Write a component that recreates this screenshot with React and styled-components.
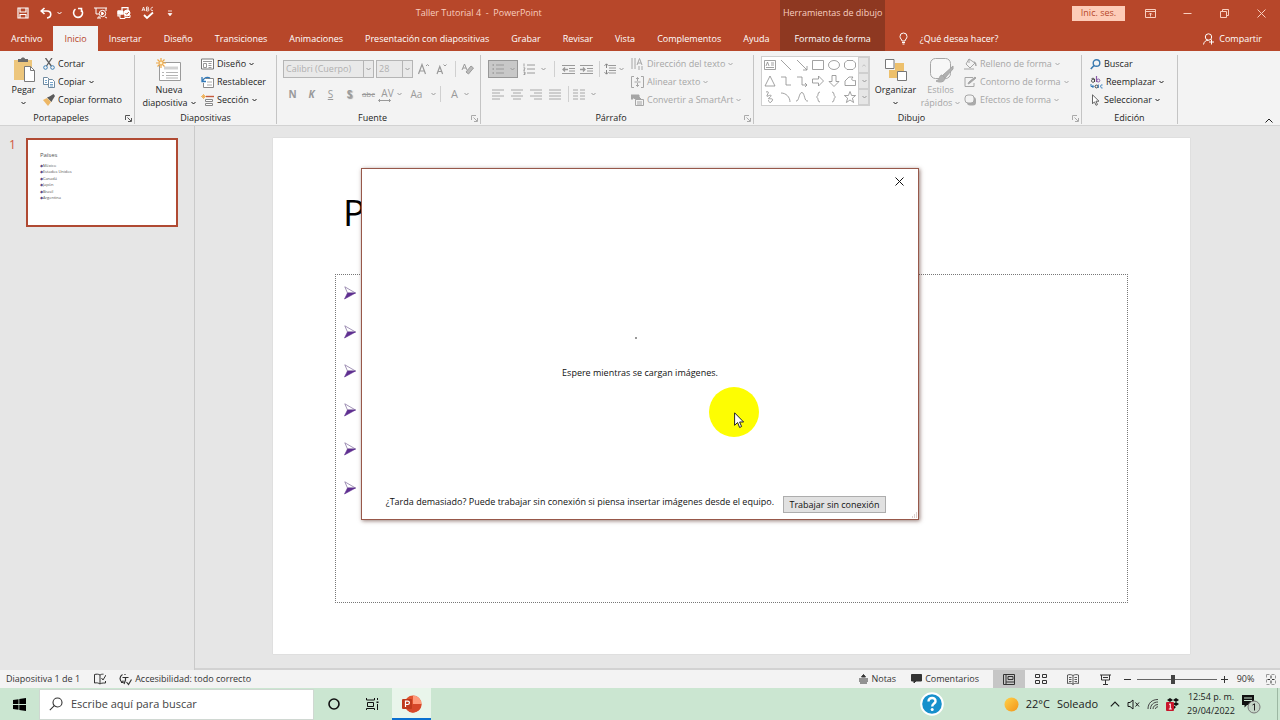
import { useState } from "react";
import styled, { createGlobalStyle, css } from "styled-components";

const GlobalStyle = createGlobalStyle`
  * {
    box-sizing: border-box;
  }

  body {
    margin: 0;
    font-family: "Open Sans", "Noto Sans", sans-serif;
    font-size: 9px;
    line-height: 12px;
    color: #1e1e1e;
  }

  button,
  select,
  input {
    margin: 0;
    padding: 0;
    border: none;
    background: none;
    font: inherit;
    color: inherit;
  }

  svg {
    display: block;
    flex: none;
  }
`;

const Window = styled.div`
  position: relative;
  display: flex;
  flex-direction: column;
  min-height: 100vh;
  background: #e6e6e6;
  overflow: hidden;
`;

/* ---------- header ---------- */

const Header = styled.header`
  display: flex;
  height: 51px;
  background: #b7472a;
  color: #fff;
  white-space: nowrap;
`;

const HeaderBlock = styled.div`
  display: flex;
  flex-direction: column;
  flex: ${(props) => (props.$grow ? "1" : "none")};
  background: ${(props) => (props.$dark ? "#8e3821" : "none")};
`;

const TitleRow = styled.div`
  display: flex;
  align-items: center;
  justify-content: ${(props) => props.$justify || "flex-start"};
  height: 26px;
  color: #f9cfc0;
`;

const QuickAccess = styled.div`
  display: flex;
  align-items: center;
  padding-left: 16px;
  gap: 9px;
  color: #fff;
`;

const UndoGroup = styled.div`
  display: flex;
  align-items: center;
  gap: 4px;
`;

const Title = styled.div`
  flex: 1;
  text-align: center;
  white-space: pre;
`;

const IconButton = styled.button`
  display: flex;
  align-items: center;
  justify-content: center;
  flex: none;
  width: ${(props) => props.$width || 14}px;
  height: ${(props) => props.$height || 14}px;
  color: ${(props) => props.$color || "inherit"};
`;

const TabRow = styled.nav`
  display: flex;
  align-items: stretch;
  flex: 1;
`;

const Tab = styled.button`
  height: 25px;
  padding: 0 ${(props) => props.$pad || 11}px;

  ${(props) =>
    props.$active &&
    css`
      background: #f3f3f3;
      color: #b7472a;
    `}
`;

const TellMe = styled.button`
  display: flex;
  align-items: center;
  gap: 12px;
  padding-left: 14px;
`;

const Share = styled.button`
  display: flex;
  align-items: center;
  gap: 4px;
  margin-left: auto;
  padding-right: 18px;
`;

const SignIn = styled.button`
  width: 53px;
  height: 15px;
  margin-right: 7px;
  background: #fdccb8;
  color: #b7472a;
`;

/* ---------- ribbon ---------- */

const Ribbon = styled.div`
  display: flex;
  height: 75px;
  padding-top: 4px;
  background: #f3f3f3;
  border-bottom: 1px solid #d2d2d2;
  white-space: nowrap;
`;

const Group = styled.section`
  display: flex;
  flex-direction: column;
  flex: none;
  width: ${(props) => props.$width}px;
  height: 69px;
  border-right: 1px solid #c4c4c4;
`;

const GroupBody = styled.div`
  display: flex;
  gap: ${(props) => props.$gap || 0}px;
  height: 57px;
  padding-left: ${(props) => props.$left || 0}px;
`;

const GroupFooter = styled.div`
  display: flex;
  align-items: center;
  height: 12px;
  text-align: center;
`;

const GroupLabel = styled.div`
  flex: 1;
`;

const Stack = styled.div`
  display: flex;
  flex-direction: column;
`;

const SmallButton = styled.button`
  display: flex;
  align-items: center;
  gap: 3px;
  height: 18px;
  color: ${(props) => (props.$off ? "#a6a6a6" : "#1e1e1e")};
`;

const BigButton = styled.button`
  display: flex;
  flex-direction: column;
  align-items: center;
  width: ${(props) => props.$width}px;
  padding-top: 2px;
  color: ${(props) => (props.$off ? "#a6a6a6" : "#1e1e1e")};
`;

const BigLabel = styled.span`
  display: flex;
  align-items: center;
  gap: 3px;
  height: 13px;
`;

const Picture = styled.span`
  display: flex;
  align-items: center;
  justify-content: center;
  height: 26px;
`;

const ToolRow = styled.div`
  display: flex;
  align-items: center;
  height: 18px;
  margin-top: 5px;
  color: #9a9a9a;

  & + & {
    margin-top: 7px;
  }
`;

const Combo = styled.label`
  display: flex;
  align-items: center;
  width: ${(props) => props.$width}px;
  height: 18px;
  margin-right: 2px;
  border: 1px solid #b5b5b5;
  background: #e9e9e9;

  select {
    flex: 1;
    min-width: 0;
    height: 16px;
    padding-left: 2px;
    appearance: none;
    color: #b0b0b0;
    opacity: 1;
  }

  svg {
    width: 10px;
    height: 16px;
    padding: 6px 2px;
    border-left: 1px solid #b5b5b5;
  }
`;

const Divider = styled.span`
  width: 1px;
  height: 16px;
  margin: 0 4px;
  background: #d0d0d0;
`;

const Letter = styled.button`
  width: ${(props) => props.$width || 19}px;
  text-align: center;
  font-size: ${(props) => props.$size || 10}px;
  font-weight: ${(props) => (props.$bold ? 700 : 400)};
  font-style: ${(props) => (props.$italic ? "italic" : "normal")};
  text-decoration: ${(props) => props.$line || "none"};
  text-shadow: ${(props) => (props.$shadow ? "1px 1px 1px #999" : "none")};
`;

const ListButton = styled.button`
  display: flex;
  align-items: center;
  justify-content: center;
  gap: 6px;
  width: 30px;
  height: 18px;
  margin-right: 1px;
  border: 1px solid ${(props) => (props.$pressed ? "#979797" : "transparent")};
  background: ${(props) => (props.$pressed ? "#c8c8c8" : "none")};
`;

const Gallery = styled.div`
  display: flex;
  height: 50px;
  margin-top: 1px;
  border: 1px solid #cfcfcf;
  background: #fff;
`;

const Shapes = styled.div`
  display: grid;
  grid-template-columns: repeat(6, 16px);
  grid-auto-rows: 16px;
`;

const Scroller = styled.div`
  display: flex;
  flex-direction: column;

  button {
    flex: 1;
    width: 11px;
    padding-left: 3px;
    border: 1px solid #cfcfcf;
    background: #e6e6e6;
    color: #999;
  }
`;

const Collapse = styled.button`
  align-self: flex-end;
  margin-left: auto;
  padding: 0 7px 2px 0;
`;

/* ---------- workspace ---------- */

const Workspace = styled.main`
  display: flex;
  flex: 1;
`;

const Thumbnails = styled.aside`
  display: flex;
  align-items: flex-start;
  flex: none;
  width: 195px;
  padding: 12px 0 0 9px;
  gap: 10px;
  border-right: 1px solid #cacaca;
  font-size: 12px;
  line-height: 14px;
  color: #d0583e;
`;

const Thumbnail = styled.div`
  width: 152px;
  height: 89px;
  padding: 7px 12px;
  border: 2px solid #b04a33;
  background: #fff;
  color: #555;
  font-size: 6px;
  line-height: 16px;

  ul {
    display: flex;
    flex-direction: column;
    justify-content: space-between;
    height: 38px;
    margin: 0;
    padding: 0;
    list-style: none;
    font-size: 4px;
    line-height: 6px;
  }

  li::before {
    content: "◆";
    color: #5b4a86;
  }
`;

const Canvas = styled.div`
  flex: 1;
  padding: 12px 90px 14px 78px;
  border-bottom: 2px solid #d2d2d2;
`;

const Slide = styled.article`
  width: 100%;
  aspect-ratio: 16 / 9;
  padding: 48px 62px 0;
  background: #fff;
  box-shadow: 0 0 1px #bbb;
  color: #000;

  h1 {
    height: 88px;
    margin: 0;
    padding-left: 8px;
    font-size: 37px;
    font-weight: 400;
    line-height: 52px;
  }
`;

const Placeholder = styled.ul`
  height: 329px;
  margin: 0;
  padding: 0 0 0 8px;
  border: 1px dotted #777;
  list-style: none;

  li {
    height: 39px;
    padding-top: 11px;
  }
`;

/* ---------- dialog ---------- */

const Overlay = styled.div`
  position: absolute;
  inset: 0 0 32px;
  display: flex;
  align-items: center;
  justify-content: center;
`;

const Dialog = styled.div`
  display: flex;
  flex-direction: column;
  width: 558px;
  height: 352px;
  border: 1px solid #97584a;
  background: #fff;
  box-shadow: 1px 1px 4px rgba(80, 40, 30, 0.6);
  color: #111;
`;

const DialogTop = styled.div`
  display: flex;
  justify-content: flex-end;
  padding: 5px 12px 0 0;
`;

const Loading = styled.div`
  display: flex;
  flex-direction: column;
  align-items: center;
  flex: 1;
  padding-top: 149px;
  gap: 28px;
`;

const Dot = styled.span`
  width: 2px;
  height: 2px;
  margin-right: 8px;
  background: #999;
`;

const DialogBottom = styled.div`
  display: flex;
  align-items: flex-start;
  justify-content: flex-end;
  gap: 9px;
  height: 23px;
`;

const OfflineButton = styled.button`
  width: 103px;
  height: 17px;
  margin-right: 16px;
  border: 1px solid #adadad;
  background: #e1e1e1;
`;

const Grip = styled.span`
  align-self: flex-end;
`;

const Pointer = styled.div`
  position: absolute;
  left: 709px;
  top: 387px;
  width: 50px;
  height: 50px;
  padding: 25px 0 0 25px;
  border-radius: 50%;
  background: #fdfd02;
`;

/* ---------- status bar ---------- */

const StatusBar = styled.footer`
  display: flex;
  align-items: center;
  height: 18px;
  padding-left: 6px;
  background: #f3f3f3;
  color: #333;
  white-space: nowrap;
`;

const StatusItem = styled.button`
  display: flex;
  align-items: center;
  gap: 3px;
  margin-right: ${(props) => props.$after || 0}px;
`;

const ViewButton = styled.button`
  display: flex;
  align-items: center;
  justify-content: center;
  width: 32px;
  height: 18px;
  background: ${(props) => (props.$active ? "#c6c6c6" : "none")};
`;

const Spacer = styled.div`
  flex: 1;
`;

const ZoomSlider = styled.input`
  width: 80px;
  height: 12px;
  margin: 0 4px;
  appearance: none;
  background: linear-gradient(#666, #666) center / 100% 1px no-repeat;

  &::-webkit-slider-thumb {
    appearance: none;
    width: 4px;
    height: 9px;
    background: #444;
  }
`;

const ZoomValue = styled.button`
  width: 31px;
  margin: 0 5px 0 2px;
`;

/* ---------- taskbar ---------- */

const Taskbar = styled.footer`
  display: flex;
  align-items: center;
  height: 32px;
  background: #cbe6d1;
  color: #1a1a1a;
  white-space: nowrap;
`;

const SearchBox = styled.label`
  display: flex;
  align-items: center;
  gap: 8px;
  width: 275px;
  height: 31px;
  padding-left: 9px;
  border: 1px solid #d0d8d2;
  background: #fff;

  input {
    flex: 1;
    min-width: 0;
    outline: none;
    font-size: 11px;
  }

  input::placeholder {
    color: #444;
    opacity: 1;
  }
`;

const TaskButton = styled.button`
  display: flex;
  align-items: center;
  justify-content: center;
  width: 39px;
  height: 32px;
  border-bottom: 2px solid ${(props) => (props.$active ? "#0a6fd0" : "transparent")};
  border-top: 2px solid transparent;
  background: ${(props) => (props.$active ? "#e9f5eb" : "none")};
`;

const Weather = styled.button`
  display: flex;
  align-items: center;
  gap: 7px;
  margin-left: 60px;
  font-size: 11px;
`;

const Tray = styled.div`
  display: flex;
  align-items: center;
  gap: 7px;
  padding: 0 5px 0 12px;
`;

const Clock = styled.time`
  width: 54px;
  text-align: center;
  line-height: 14px;
`;

const ShowDesktop = styled.span`
  width: 3px;
  height: 32px;
  margin-left: 13px;
  border-left: 1px solid #9db8a3;
`;

/* ---------- icons ---------- */

function Icon({ w = 12, h = 12, box, children }) {
  return (
    <svg
      width={w}
      height={h}
      viewBox={box || `0 0 ${w} ${h}`}
      fill="none"
      stroke="currentColor"
      strokeWidth="1"
      aria-hidden="true"
    >
      {children}
    </svg>
  );
}

const Chevron = () => (
  <Icon w={5} h={4}>
    <path d="M.5 1l2 2 2-2" />
  </Icon>
);

const ChevronUp = ({ w = 8 }) => (
  <Icon w={w} h={w / 2 + 1} box="0 0 8 5">
    <path d="M.5 4.500L4 1l3.500 3.500" />
  </Icon>
);

const SaveIcon = () => (
  <Icon>
    <path d="M1 1h10v10H1zM3 1v4h6V1M3 11V7.500h6V11" strokeWidth="1.200" />
  </Icon>
);

const UndoIcon = () => (
  <Icon>
    <path d="M4.500 1L1.200 4l3.300 3M1.500 4H7c5 0 5 6.500 0 7" strokeWidth="1.600" />
  </Icon>
);

const RepeatIcon = () => (
  <Icon>
    <path d="M3.500 2.200a4.500 4.500 0 1 0 5.500.3M9.500 5V1.500H6" strokeWidth="1.600" />
  </Icon>
);

const PresentIcon = () => (
  <Icon w={14}>
    <path d="M0 1h13M2 1v6h3M3 11h4M5 11V9" />
    <circle cx="8.500" cy="6.500" r="3.200" />
    <path d="M7.700 5v3l2.200-1.500z" fill="currentColor" />
    <path d="M12 1v3M11 10l2 1" />
  </Icon>
);

const PrintIcon = () => (
  <Icon w={14}>
    <path d="M5 4V.6h6V4M3 9H1V4h3" strokeWidth="1.200" />
    <path d="M1 4h5v3H1z" fill="currentColor" />
    <path d="M3 7h5v4.500H3z" />
    <circle cx="10" cy="6" r="3" fill="currentColor" />
    <path d="M8.500 6l1.200 1.300L11.800 5" stroke="#b7472a" />
    <path d="M8 10.500h5V8" />
  </Icon>
);

const SpellIcon = () => (
  <Icon w={13} h={14}>
    <path d="M1 5L2.500 1 4 5M1.500 3.800h2M5.500 1v4H7c1.300 0 1.300-2 0-2H5.500M5.500 1h1.200c1.200 0 1.200 2 0 2M12 1.500C9.500.2 9 5.800 12 4.500" strokeWidth=".8" />
    <path d="M3 9l3 3 6-5.500" strokeWidth="1.800" />
  </Icon>
);

const CustomizeIcon = () => (
  <Icon w={6} h={7}>
    <path d="M1 1h4M1.200 3.500h3.600L3 5.800z" fill="currentColor" strokeWidth=".8" />
  </Icon>
);

const RibbonOptionsIcon = () => (
  <Icon w={11} h={9}>
    <path d="M.5.5h10v8H.5zM.5 2.500h10M5.500 7.500V4M4 5.500L5.500 4 7 5.500" />
  </Icon>
);

const MinimizeIcon = () => (
  <Icon w={9} h={9}>
    <path d="M.5 4.500h8" />
  </Icon>
);

const RestoreIcon = () => (
  <Icon w={9} h={9}>
    <path d="M.5 2.500h6v6h-6zM2.500 2.500v-2h6v6h-2" />
  </Icon>
);

const CloseIcon = () => (
  <Icon w={9} h={9}>
    <path d="M.5.5l8 8M8.500.5l-8 8" />
  </Icon>
);

const BulbIcon = () => (
  <Icon w={9} h={13}>
    <path d="M3 9c0-1.500-2-2.300-2-4.500a3.500 3.500 0 0 1 7 0C8 6.700 6 7.500 6 9zM3 10.500h3M3.500 12h2" />
  </Icon>
);

const PersonIcon = () => (
  <Icon>
    <circle cx="5.500" cy="4" r="3.200" />
    <path d="M.5 11.500C1 8.500 3 7.200 5.500 7.200M8.500 6.500v5M6 9h5" />
  </Icon>
);

const PasteIcon = () => (
  <Icon w={24} h={26}>
    <path d="M2 3h18v20H2z" fill="#edc67c" stroke="none" />
    <path d="M6 5V2h3c0-2 4-2 4 0h3v3z" fill="#6a6a6a" stroke="none" />
    <path d="M12.500 9.500h6l4 4v11h-10z" fill="#fff" stroke="#7a7a7a" />
    <path d="M18.500 9.500v4h4" stroke="#7a7a7a" />
  </Icon>
);

const CutIcon = () => (
  <Icon>
    <path d="M2.500 0l5.800 8M9 0L3.500 8" stroke="#5e5e5e" strokeWidth="1.300" />
    <circle cx="2.500" cy="9.500" r="1.800" stroke="#3c7fb5" />
    <circle cx="9.500" cy="9.500" r="1.800" stroke="#3c7fb5" />
  </Icon>
);

const CopyIcon = () => (
  <Icon>
    <path d="M.5 1.500h4l2 2v5h-6z" fill="#fff" stroke="#6f8aa0" />
    <path d="M5.500 3.500h4l2 2v6h-6z" fill="#fff" stroke="#6f8aa0" />
    <path d="M2 4.500h2M2 6.500h2M7 6.500h3M7 8.500h3M7 10h3" stroke="#3c7fb5" strokeWidth=".7" />
  </Icon>
);

const BrushIcon = () => (
  <Icon>
    <path d="M0 6l4-2 4 4-3 4z" fill="#edb765" stroke="none" />
    <path d="M4 3.500l4.500 4.500 1-2L12 2 10.500 0 6.500 2.500z" fill="#5a5a5a" stroke="none" />
  </Icon>
);

const NewSlideIcon = () => (
  <Icon w={26} h={24}>
    <path d="M3.500 4.500h21v18h-21z" fill="#fff" stroke="#9a9a9a" />
    <path d="M8 8.500h14v3H8z" fill="#d2d2d2" stroke="none" />
    <path d="M6 14.500h2M10 14.500h12M6 17.500h2M10 17.500h12M10 20h12" stroke="#b4b4b4" />
    <path d="M5 0v10M0 5h10M1.500 1.500l7 7M8.500 1.500l-7 7" stroke="#eda94a" strokeWidth="1.200" />
    <circle cx="5" cy="5" r="2" fill="#fff3d0" stroke="#eda94a" />
  </Icon>
);

const LayoutIcon = () => (
  <Icon w={13}>
    <path d="M.5 1h12v10H.5z" fill="#fff" stroke="#777" />
    <path d="M2 3.500h9M2.500 5.500h3v4h-3zM7.500 5.500h3M7.500 7.500h3M7.500 9.500h3" stroke="#999" />
  </Icon>
);

const ResetIcon = () => (
  <Icon w={13}>
    <path d="M4.500 2.500h8v9h-10V7" fill="#fff" stroke="#888" />
    <path d="M6 6h5M6 9h5" stroke="#aaa" />
    <path d="M1 1v4.500h4M1.500 5C3 1.500 6.500.5 9 2" stroke="#2f78b8" strokeWidth="1.300" />
  </Icon>
);

const SectionIcon = () => (
  <Icon w={13}>
    <path d="M5 2.500h8" stroke="#c65a3b" strokeWidth="1.400" />
    <path d="M4.500 5.500h7v2h-7zM4.500 9.500h7v2h-7z" fill="#fff" stroke="#888" />
    <path d="M2.500 0v5M0 2.500h5M1 1l3 3M4 1L1 4" stroke="#eda94a" strokeWidth=".8" />
  </Icon>
);

const GrowIcon = ({ down }) => (
  <Icon w={12} h={12}>
    <path d={down ? "M1 11l2.800-7.500L6.600 11M2 8.500h3.600" : "M.5 11L4 1.500 7.500 11M1.800 8h4.400"} strokeWidth="1.200" />
    <path d={down ? "M7.500 1.500L9 3l1.500-1.500" : "M8 3l1.500-1.500L11 3"} />
  </Icon>
);

const EraserIcon = () => (
  <Icon w={13} h={13}>
    <path d="M1 7l2.500-6L6 7M2 5h3" />
    <path d="M5 9l5-6 2.500 2-5 6z" fill="#bbb" />
  </Icon>
);

const SpacingLettersArrow = () => (
  <Icon w={13} h={3}>
    <path d="M.5 1.500h12M2 0L.5 1.500 2 3M11 0l1.500 1.500L11 3" />
  </Icon>
);

const ListIcon = ({ numbered }) => (
  <Icon w={12} h={12}>
    <path d="M4 2h8M4 6h8M4 10h8" />
    {numbered ? (
      <path d="M1 .5v3M.5 4.800h1.300v1.200L.5 7.300h1.500M.5 9h1.500v2.500H.5M1 10.200h1" stroke="#8a8a8a" strokeWidth=".8" />
    ) : (
      <path d="M.5 2h1.500M.5 6h1.500M.5 10h1.500" strokeWidth="1.500" />
    )}
  </Icon>
);

const IndentIcon = ({ right }) => (
  <Icon w={13} h={11}>
    <path d="M0 1.500h13M7 4.500h6M7 7h6M0 9.500h13" />
    <path d={right ? "M0 5.500h5M3 3.500l2 2-2 2" : "M6 5.500H1M3 3.500l-2 2 2 2"} strokeWidth="1.300" />
  </Icon>
);

const SpacingIcon = () => (
  <Icon>
    <path d="M5 2.500h7M5 5h7M5 7.500h7M5 10h7" />
    <path d="M2.500 5V1M.5 2.800L2.500.8l2 2M2.500 7v4M.5 9.200l2 2 2-2" stroke="#858585" />
  </Icon>
);

const AlignIcon = ({ d }) => (
  <Icon w={12} h={11}>
    <path d={d} stroke="#a8a8a8" />
  </Icon>
);

const DirectionIcon = () => (
  <Icon w={13}>
    <path d="M1 0v11M4 0v11M6 7l2.500-6.500L11 7M7 5h3M8 8v4M11 8v4" />
  </Icon>
);

const AlignTextIcon = () => (
  <Icon w={13}>
    <path d="M3 .5H.5v11H3M10 .5h2.500v11H10M3.500 6h6M6.500 5V1.500M5 3l1.500-1.500L8 3M6.500 7v3.500M5 9l1.500 1.500L8 9" />
  </Icon>
);

const SmartArtIcon = () => (
  <Icon w={13}>
    <path d="M0 1h8v2H2v2H0zM2 3h6l2 2H4z" fill="currentColor" />
    <path d="M4.500 5.500h8v6h-8zM6 8h5M6 10h5" fill="#f3f3f3" />
  </Icon>
);

const ArrangeIcon = () => (
  <Icon w={22} h={22}>
    <path d="M10 4h9v9h-9zM4 11h8v8H4z" fill="#edc06c" stroke="none" />
    <path d="M.5.5h8.500v9H.5zM12.500 12.500h9v9h-9z" fill="#fff" stroke="#777" />
  </Icon>
);

const StylesIcon = () => (
  <Icon w={26} h={26}>
    <rect x="2.500" y="1.500" width="20" height="20" rx="5" fill="#f7f7f7" />
    <path d="M25 9L15 18l2 3 8-9zM14 18c-3 0-2 5-6 6 4 2 9 1 9-3z" fill="#b0b0b0" />
  </Icon>
);

const FillIcon = () => (
  <Icon w={13}>
    <path d="M5 1l6 4-5 5-4-4zM5 1v4" />
    <path d="M10 4c2 1 2 2 2 4" strokeWidth="1.500" />
    <path d="M0 11h10" stroke="#ccc" strokeWidth="2" />
  </Icon>
);

const OutlineIcon = () => (
  <Icon w={13}>
    <path d="M9 1.500H1v9h9V7" />
    <path d="M4 8l1-2 6-5 1 1-6 5z" fill="currentColor" />
  </Icon>
);

const EffectsIcon = () => (
  <Icon w={13}>
    <rect x="3" y="3" width="9" height="8.500" rx="3" fill="#aaa" stroke="none" />
    <rect x="1" y="1" width="9" height="8" rx="3" fill="#f3f3f3" />
  </Icon>
);

const FindIcon = () => (
  <Icon w={11} h={11}>
    <circle cx="6.500" cy="4" r="3.300" stroke="#3a7ab0" strokeWidth="1.400" />
    <path d="M4 6.500L.8 10" stroke="#3a7ab0" strokeWidth="1.600" />
  </Icon>
);

const ReplaceIcon = () => (
  <Icon w={13} h={13}>
    <path d="M4.500 3v3M4.500 4.500a1.500 1.500 0 1 0 0 .6M1.500 2.800c1-.8 3-.6 3 .6" stroke="#444" />
    <path d="M6.500 0v6" stroke="#8a5aa8" strokeWidth="1.200" />
    <circle cx="8.300" cy="4.500" r="1.500" stroke="#8a5aa8" />
    <path d="M1 8v2.500h2.500M2.500 9l1.300 1.500L2.500 12" stroke="#2f78b8" />
    <circle cx="6.500" cy="10.500" r="1.400" stroke="#444" />
    <path d="M8.300 8.500V12M12.500 9c-2.500-1-2.500 3.500 0 3" stroke="#2f78b8" />
  </Icon>
);

const SelectIcon = () => (
  <Icon w={11}>
    <path d="M2.500.8v9l2-2 1.500 3.500 1.500-.7L6 7.200h3z" fill="#fff" stroke="#666" />
  </Icon>
);

const LauncherIcon = () => (
  <Icon w={7} h={7}>
    <path d="M.5 5V.5H5M2.500 2.500l3.500 3.500M6.500 3v3.500H3" />
  </Icon>
);

const BulletArrow = () => (
  <Icon w={12} h={14}>
    <path d="M.8.8L11.500 7 3.500 7z" stroke="#8b7aa5" strokeWidth=".8" />
    <path d="M3.500 7h8L.5 13z" fill="#5f2f91" stroke="#5f2f91" strokeWidth=".6" />
  </Icon>
);

const CursorIcon = () => (
  <Icon w={11} h={17}>
    <path d="M.6.8v12.500l3-2.800 2 5 2-1-2-4.500h4z" fill="#fff" stroke="#222" />
  </Icon>
);

const GripIcon = () => (
  <Icon w={7} h={7}>
    <path d="M5 1h1M3 3h1M5 3h1M1 5h1M3 5h1M5 5h1" stroke="#b9a29c" />
  </Icon>
);

const BookIcon = () => (
  <Icon>
    <path d="M6 2C4.500 1 2.500 1 .5 1.500v8.500C3 9.500 4.500 10 6 11c1-.8 2-1 5.500-1V8M6 2v9M6 2c1-.8 2-.8 3.500-.8M7.500 5l1.500 2 3-5" />
  </Icon>
);

const AccessIcon = () => (
  <Icon w={13} h={13}>
    <path d="M3.500 1.500C0 3.500.5 8 3.500 9.500M2 9.500h2V7.500M6 1v1M3.500 4.500h6M6.500 4.500v3M6.500 7l-1.500 4M7.500 9l2 2.500 3-5" strokeWidth="1.200" />
  </Icon>
);

const NotesIcon = () => (
  <Icon w={9} h={10}>
    <path d="M4.500.5L2.500 3h4zM0 5h9M0 7h9M1 9h7" fill="currentColor" />
  </Icon>
);

const CommentIcon = () => (
  <Icon w={11} h={10}>
    <path d="M.5.5h10v6.500H5L3 9V7H.5z" fill="currentColor" />
  </Icon>
);

const NormalViewIcon = () => (
  <Icon w={12} h={11}>
    <path d="M.5.5h11v10H.5zM3 .5v10M5 2.500h5v3H5zM3 8h8.500" />
  </Icon>
);

const SorterIcon = () => (
  <Icon w={12} h={10}>
    <path d="M.5.5h4v3h-4zM7.500.5h4v3h-4zM.5 6.500h4v3h-4zM7.500 6.500h4v3h-4z" />
  </Icon>
);

const ReadingIcon = () => (
  <Icon w={12} h={11}>
    <path d="M6 1.500C4 .3 2.500.5.5 1v8.500c2-.5 3.500-.5 5.500.8 2-1.300 3.500-1.300 5.500-.8V1C9.500.5 8 .3 6 1.500zM6 1.500v9M2 3.500h2.500M2 5.500h2.500M2 7.500h2.500M7.500 3.500H10M7.500 5.500H10M7.500 7.500H10" strokeWidth=".8" />
  </Icon>
);

const ShowIcon = () => (
  <Icon w={11} h={11}>
    <path d="M0 1h11M1.500 1v5h8V1M3 3.500h5M5.500 6v4M3 10.500h5" />
  </Icon>
);

const FitIcon = () => (
  <Icon w={10} h={11}>
    <path d="M.5.5h9v10h-9z" stroke="#999" strokeDasharray="3 2" />
    <path d="M5 1.500v3M5 6.500v3M1.500 5.500h2.500M6 5.500h2.500" />
  </Icon>
);

const WindowsIcon = () => (
  <Icon w={13} h={13}>
    <path d="M0 2l5.500-.8V6H0zM6.300 1L13 0v6H6.300zM0 7h5.500v4.800L0 11zM6.300 7H13v6l-6.700-1z" fill="#000" stroke="none" />
  </Icon>
);

const SearchIcon = () => (
  <Icon w={14} h={14}>
    <circle cx="8.500" cy="5.500" r="4.500" stroke="#333" strokeWidth="1.100" />
    <path d="M5.300 8.700L.8 13.200" stroke="#333" strokeWidth="1.100" />
  </Icon>
);

const CortanaIcon = () => (
  <Icon w={12} h={12}>
    <circle cx="6" cy="6" r="5" stroke="#111" strokeWidth="1.600" />
  </Icon>
);

const TaskViewIcon = () => (
  <Icon w={13} h={12}>
    <path d="M.5 0v2h8V0M1.500 4.500h6v4h-6zM.5 12v-1.500h8V12M11.500 0v2M11.500 6v6" stroke="#111" />
    <path d="M10.500 3.500h2v1.500h-2z" fill="#111" stroke="none" />
  </Icon>
);

const PowerPointIcon = () => (
  <Icon w={20} h={18}>
    <circle cx="11" cy="9" r="8.500" fill="#e0532f" stroke="none" />
    <path d="M11 .5a8.500 8.500 0 0 1 8.500 8.500H11z" fill="#ff9b7c" stroke="none" />
    <path d="M11 9h8.500a8.500 8.500 0 0 1-15 5.500z" fill="#d6472a" stroke="none" />
    <rect x="0" y="4" width="10" height="10" rx="1" fill="#bf3a1d" stroke="none" />
    <path d="M3.500 12V6.200h2.200c2.300 0 2.300 3.300 0 3.300H3.500" stroke="#fff" strokeWidth="1.200" />
  </Icon>
);

const HelpIcon = () => (
  <Icon w={24} h={24}>
    <circle cx="12" cy="12" r="10.800" fill="#1690cc" stroke="#fff" strokeWidth="2" />
    <path d="M8.500 9.500c0-5 7.500-4.500 7 0-.2 2-3.300 2.300-3.300 5" stroke="#fff" strokeWidth="2.400" />
    <circle cx="12.200" cy="17.500" r="1.500" fill="#fff" stroke="none" />
  </Icon>
);

const SunIcon = () => (
  <Icon w={15} h={15}>
    <defs>
      <linearGradient id="sun" x1="0" y1="0" x2="1" y2="1">
        <stop offset="0" stopColor="#ffd24a" />
        <stop offset="1" stopColor="#f39419" />
      </linearGradient>
    </defs>
    <circle cx="7.500" cy="7.500" r="7" fill="url(#sun)" stroke="none" />
  </Icon>
);

const SpeakerIcon = () => (
  <Icon w={13} h={11}>
    <path d="M1 3.500h2L6 1v9L3 7.500H1zM8.500 3.500l3.500 4M12 3.500l-3.500 4" />
  </Icon>
);

const WifiIcon = () => (
  <Icon w={12} h={12}>
    <path d="M1 11C1 5 5 1.500 11 1.500M3.500 11c0-4 3-7 7.500-7M6 11c0-2.500 2-4.500 5-4.500M8.500 11c0-1.500 1-2.200 2.500-2.200" stroke="#444" />
  </Icon>
);

const DropboxIcon = () => (
  <Icon w={13} h={13}>
    <path d="M4 0l3 2-3 2-3-2zM10 0l3 2-3 2-3-2zM10 4l3 2-3 2-3-2zM7 7l3 2-2 2z" fill="#111" stroke="none" />
    <rect x="0" y="4" width="8" height="9" rx="1" fill="#c9152b" stroke="none" />
    <path d="M3 6.500L4.300 5.800V11M2.800 11h3" stroke="#fff" />
  </Icon>
);

const NoticeIcon = () => (
  <Icon w={20} h={20}>
    <path d="M1 1h12v10H6l-2.500 2.500V11H1z" fill="#111" stroke="none" />
    <path d="M3 4h8M3 6.500h8" stroke="#cbe6d1" />
    <circle cx="13" cy="13" r="6" fill="#c5d6c8" stroke="#777" />
    <path d="M11.500 11l2-1.200v6.700" stroke="#222" />
  </Icon>
);

/* ---------- data ---------- */

const tabs = [
  "Archivo",
  "Inicio",
  "Insertar",
  "Diseño",
  "Transiciones",
  "Animaciones",
  "Presentación con diapositivas",
  "Grabar",
  "Revisar",
  "Vista",
  "Complementos",
  "Ayuda",
];

const countries = [
  "México",
  "Estados Unidos",
  "Canadá",
  "Japón",
  "Brasil",
  "Argentina",
];

const alignments = [
  "M0 1h12M0 4h8M0 7h12M0 10h8",
  "M0 1h12M2 4h8M0 7h12M2 10h8",
  "M0 1h12M4 4h8M0 7h12M4 10h8",
  "M0 1h12M0 4h12M0 7h12M0 10h12",
];

const shapes = [
  "M2.500 3.500h11v9h-11zM4 9l1.500-4L7 9M9 6h3M9 8h3M4 10.500h8",
  "M3 3l10 10",
  "M3 3l10 10M13 9v4H9",
  "M2.500 3.500h11v9h-11z",
  "M2.500 8a5.500 4.500 0 1 0 11 0a5.500 4.500 0 1 0-11 0",
  "M5 3.500h6l2.500 2.500v4l-2.500 2.500H5L2.500 10V6z",
  "M8 3l5 10H3z",
  "M3 4h5v8h5",
  "M3 4h5v8h5M11 10l2 2-2 2",
  "M2.500 6h6V3l5 5-5 5v-3h-6z",
  "M6 2.500h4v6h3l-5 5-5-5h3z",
  "M3 12.500V8l4-4h4c-3 3 0 4 2.500 3.500v5z",
  "M4 3c6-2-2 6 2 4s4 0 1 2 6-1 3 3-3-1-4-1",
  "M3 4c5 0 9 4 9 9",
  "M2 12C5 13 5 3 8 3.500S10 13 14 12",
  "M10 3C7 3 9 7 6.500 8 9 9 7 13 10 13",
  "M6 3c3 0 1 4 3.500 5C7 9 9 13 6 13",
  "M8 2.500l1.600 4h4l-3.200 2.700 1.200 4.300L8 11l-3.600 2.500 1.200-4.300L2.400 6.500h4z",
];

function RibbonGroup({ width, left, gap, label, launcher, launcherColor, children }) {
  return (
    <Group $width={width}>
      <GroupBody $left={left} $gap={gap}>
        {children}
      </GroupBody>
      <GroupFooter>
        <GroupLabel>{label}</GroupLabel>
        {launcher && (
          <IconButton $width={12} $height={12} $color={launcherColor || "#aaa"}>
            <LauncherIcon />
          </IconButton>
        )}
      </GroupFooter>
    </Group>
  );
}

function Action({ icon, label, menu, off }) {
  return (
    <SmallButton $off={off}>
      {icon}
      {label}
      {menu && <Chevron />}
    </SmallButton>
  );
}

function HomeRibbon() {
  return (
    <Ribbon>
      <RibbonGroup width={135} left={4} label="Portapapeles" launcher launcherColor="#555">
        <BigButton $width={39}>
          <Picture>
            <PasteIcon />
          </Picture>
          <BigLabel>Pegar</BigLabel>
          <BigLabel>
            <Chevron />
          </BigLabel>
        </BigButton>
        <Stack>
          <Action icon={<CutIcon />} label="Cortar" />
          <Action icon={<CopyIcon />} label="Copiar" menu />
          <Action icon={<BrushIcon />} label="Copiar formato" />
        </Stack>
      </RibbonGroup>

      <RibbonGroup width={142} left={7} gap={5} label="Diapositivas">
        <BigButton $width={54}>
          <Picture>
            <NewSlideIcon />
          </Picture>
          <BigLabel>Nueva</BigLabel>
          <BigLabel>
            diapositiva
            <Chevron />
          </BigLabel>
        </BigButton>
        <Stack>
          <Action icon={<LayoutIcon />} label="Diseño" menu />
          <Action icon={<ResetIcon />} label="Restablecer" />
          <Action icon={<SectionIcon />} label="Sección" menu />
        </Stack>
      </RibbonGroup>

      <RibbonGroup width={204} left={6} label="Fuente" launcher>
        <Stack>
          <ToolRow>
            <Combo $width={91}>
              <select disabled aria-label="Fuente">
                <option>Calibri (Cuerpo)</option>
              </select>
              <Chevron />
            </Combo>
            <Combo $width={37}>
              <select disabled aria-label="Tamaño">
                <option>28</option>
              </select>
              <Chevron />
            </Combo>
            <IconButton $width={18}>
              <GrowIcon />
            </IconButton>
            <IconButton $width={18}>
              <GrowIcon down />
            </IconButton>
            <Divider />
            <IconButton>
              <EraserIcon />
            </IconButton>
          </ToolRow>
          <ToolRow>
            <Letter $bold>N</Letter>
            <Letter $bold $italic>
              K
            </Letter>
            <Letter $line="underline">S</Letter>
            <Letter $bold $shadow>
              S
            </Letter>
            <Letter $size={8} $line="line-through">
              abc
            </Letter>
            <Letter>
              AV
              <SpacingLettersArrow />
            </Letter>
            <Chevron />
            <Letter $width={29}>Aa</Letter>
            <Chevron />
            <Divider />
            <Letter $size={11}>A</Letter>
            <Chevron />
          </ToolRow>
        </Stack>
      </RibbonGroup>

      <RibbonGroup width={273} left={7} gap={4} label="Párrafo" launcher>
        <Stack>
          <ToolRow>
            <ListButton $pressed>
              <ListIcon />
              <Chevron />
            </ListButton>
            <ListButton>
              <ListIcon numbered />
              <Chevron />
            </ListButton>
            <Divider />
            <IconButton $width={18}>
              <IndentIcon />
            </IconButton>
            <IconButton $width={18}>
              <IndentIcon right />
            </IconButton>
            <Divider />
            <SpacingIcon />
            <IconButton $width={11}>
              <Chevron />
            </IconButton>
          </ToolRow>
          <ToolRow>
            {alignments.map((d) => (
              <IconButton key={d} $width={19}>
                <AlignIcon d={d} />
              </IconButton>
            ))}
            <Divider />
            <AlignIcon d="M0 1h5M7 1h5M0 4h5M7 4h5M0 7h5M7 7h5M0 10h5M7 10h5" />
            <IconButton $width={16}>
              <Chevron />
            </IconButton>
          </ToolRow>
        </Stack>
        <Stack>
          <Action off icon={<DirectionIcon />} label="Dirección del texto" menu />
          <Action off icon={<AlignTextIcon />} label="Alinear texto" menu />
          <Action off icon={<SmartArtIcon />} label="Convertir a SmartArt" menu />
        </Stack>
      </RibbonGroup>

      <RibbonGroup width={328} left={7} gap={4} label="Dibujo" launcher>
        <Gallery>
          <Shapes>
            {shapes.map((d) => (
              <IconButton key={d} $width={16} $height={16} $color="#8a8a8a">
                <Icon w={16} h={16}>
                  <path d={d} strokeWidth=".8" />
                </Icon>
              </IconButton>
            ))}
          </Shapes>
          <Scroller>
            <button aria-label="Subir">
              <ChevronUp w={4} />
            </button>
            <button aria-label="Bajar">
              <Chevron />
            </button>
            <button aria-label="Más">
              <Chevron />
            </button>
          </Scroller>
        </Gallery>
        <BigButton $width={43}>
          <Picture>
            <ArrangeIcon />
          </Picture>
          <BigLabel>Organizar</BigLabel>
          <BigLabel>
            <Chevron />
          </BigLabel>
        </BigButton>
        <BigButton $width={39} $off>
          <Picture>
            <StylesIcon />
          </Picture>
          <BigLabel>Estilos</BigLabel>
          <BigLabel>
            rápidos
            <Chevron />
          </BigLabel>
        </BigButton>
        <Stack>
          <Action off icon={<FillIcon />} label="Relleno de forma" menu />
          <Action off icon={<OutlineIcon />} label="Contorno de forma" menu />
          <Action off icon={<EffectsIcon />} label="Efectos de forma" menu />
        </Stack>
      </RibbonGroup>

      <RibbonGroup width={96} left={8} label="Edición">
        <Stack>
          <Action icon={<FindIcon />} label="Buscar" />
          <Action icon={<ReplaceIcon />} label="Reemplazar" menu />
          <Action icon={<SelectIcon />} label="Seleccionar" menu />
        </Stack>
      </RibbonGroup>

      <Collapse aria-label="Contraer">
        <ChevronUp />
      </Collapse>
    </Ribbon>
  );
}

function App() {
  const [activeTab, setActiveTab] = useState("Inicio");
  const [zoom, setZoom] = useState(45);
  const [query, setQuery] = useState("");

  return (
    <Window>
      <GlobalStyle />

      <Header>
        <HeaderBlock>
          <TitleRow>
            <QuickAccess>
              <IconButton>
                <SaveIcon />
              </IconButton>
              <UndoGroup>
                <IconButton>
                  <UndoIcon />
                </IconButton>
                <Chevron />
              </UndoGroup>
              <IconButton>
                <RepeatIcon />
              </IconButton>
              <IconButton>
                <PresentIcon />
              </IconButton>
              <IconButton>
                <PrintIcon />
              </IconButton>
              <IconButton>
                <SpellIcon />
              </IconButton>
              <IconButton>
                <CustomizeIcon />
              </IconButton>
            </QuickAccess>
            <Title>{"Taller Tutorial 4  -  PowerPoint"}</Title>
          </TitleRow>
          <TabRow>
            {tabs.map((tab) => (
              <Tab
                key={tab}
                $active={tab === activeTab}
                onClick={() => setActiveTab(tab)}
              >
                {tab}
              </Tab>
            ))}
          </TabRow>
        </HeaderBlock>
        <HeaderBlock $dark>
          <TitleRow $justify="center">Herramientas de dibujo</TitleRow>
          <TabRow>
            <Tab $pad={14}>Formato de forma</Tab>
          </TabRow>
        </HeaderBlock>
        <HeaderBlock $grow>
          <TitleRow $justify="flex-end">
            <SignIn>Inic. ses.</SignIn>
            <IconButton $width={37}>
              <RibbonOptionsIcon />
            </IconButton>
            <IconButton $width={37}>
              <MinimizeIcon />
            </IconButton>
            <IconButton $width={37}>
              <RestoreIcon />
            </IconButton>
            <IconButton $width={37}>
              <CloseIcon />
            </IconButton>
          </TitleRow>
          <TabRow>
            <TellMe>
              <BulbIcon />
              ¿Qué desea hacer?
            </TellMe>
            <Share>
              <PersonIcon />
              Compartir
            </Share>
          </TabRow>
        </HeaderBlock>
      </Header>

      <HomeRibbon />

      <Workspace>
        <Thumbnails>
          1
          <Thumbnail>
            Países
            <ul>
              {countries.map((country) => (
                <li key={country}>{country}</li>
              ))}
            </ul>
          </Thumbnail>
        </Thumbnails>
        <Canvas>
          <Slide>
            <h1>Países</h1>
            <Placeholder>
              {countries.map((country) => (
                <li key={country}>
                  <BulletArrow />
                </li>
              ))}
            </Placeholder>
          </Slide>
        </Canvas>
      </Workspace>

      <StatusBar>
        <StatusItem $after={14}>Diapositiva 1 de 1</StatusItem>
        <StatusItem $after={13}>
          <BookIcon />
        </StatusItem>
        <StatusItem>
          <AccessIcon />
          Accesibilidad: todo correcto
        </StatusItem>
        <Spacer />
        <StatusItem $after={15}>
          <NotesIcon />
          Notas
        </StatusItem>
        <StatusItem $after={14}>
          <CommentIcon />
          Comentarios
        </StatusItem>
        <ViewButton $active>
          <NormalViewIcon />
        </ViewButton>
        <ViewButton>
          <SorterIcon />
        </ViewButton>
        <ViewButton>
          <ReadingIcon />
        </ViewButton>
        <ViewButton>
          <ShowIcon />
        </ViewButton>
        <IconButton $width={12}>
          <Icon w={7} h={7}>
            <path d="M0 3.500h7" />
          </Icon>
        </IconButton>
        <ZoomSlider
          type="range"
          aria-label="Zoom"
          value={zoom}
          onChange={(e) => setZoom(e.target.value)}
        />
        <Icon w={7} h={7}>
          <path d="M0 3.500h7M3.500 0v7" />
        </Icon>
        <ZoomValue>90%</ZoomValue>
        <StatusItem $after={4}>
          <FitIcon />
        </StatusItem>
      </StatusBar>

      <Taskbar>
        <TaskButton aria-label="Inicio">
          <WindowsIcon />
        </TaskButton>
        <SearchBox>
          <SearchIcon />
          <input
            type="text"
            placeholder="Escribe aquí para buscar"
            value={query}
            onChange={(e) => setQuery(e.target.value)}
          />
        </SearchBox>
        <TaskButton>
          <CortanaIcon />
        </TaskButton>
        <TaskButton>
          <TaskViewIcon />
        </TaskButton>
        <TaskButton $active>
          <PowerPointIcon />
        </TaskButton>
        <Spacer />
        <HelpIcon />
        <Weather>
          <SunIcon />
          <span>22°C</span>
          <span>Soleado</span>
        </Weather>
        <Tray>
          <ChevronUp w={10} />
          <SpeakerIcon />
          <WifiIcon />
          <DropboxIcon />
        </Tray>
        <Clock>
          12:54 p. m.
          <br />
          29/04/2022
        </Clock>
        <IconButton $width={26} $height={24}>
          <NoticeIcon />
        </IconButton>
        <ShowDesktop />
      </Taskbar>

      <Overlay>
        <Dialog role="dialog">
          <DialogTop>
            <IconButton>
              <CloseIcon />
            </IconButton>
          </DialogTop>
          <Loading>
            <Dot />
            Espere mientras se cargan imágenes.
          </Loading>
          <DialogBottom>
            ¿Tarda demasiado? Puede trabajar sin conexión si piensa insertar
            imágenes desde el equipo.
            <OfflineButton>Trabajar sin conexión</OfflineButton>
            <Grip>
              <GripIcon />
            </Grip>
          </DialogBottom>
        </Dialog>
      </Overlay>

      <Pointer>
        <CursorIcon />
      </Pointer>
    </Window>
  );
}

export default App;
